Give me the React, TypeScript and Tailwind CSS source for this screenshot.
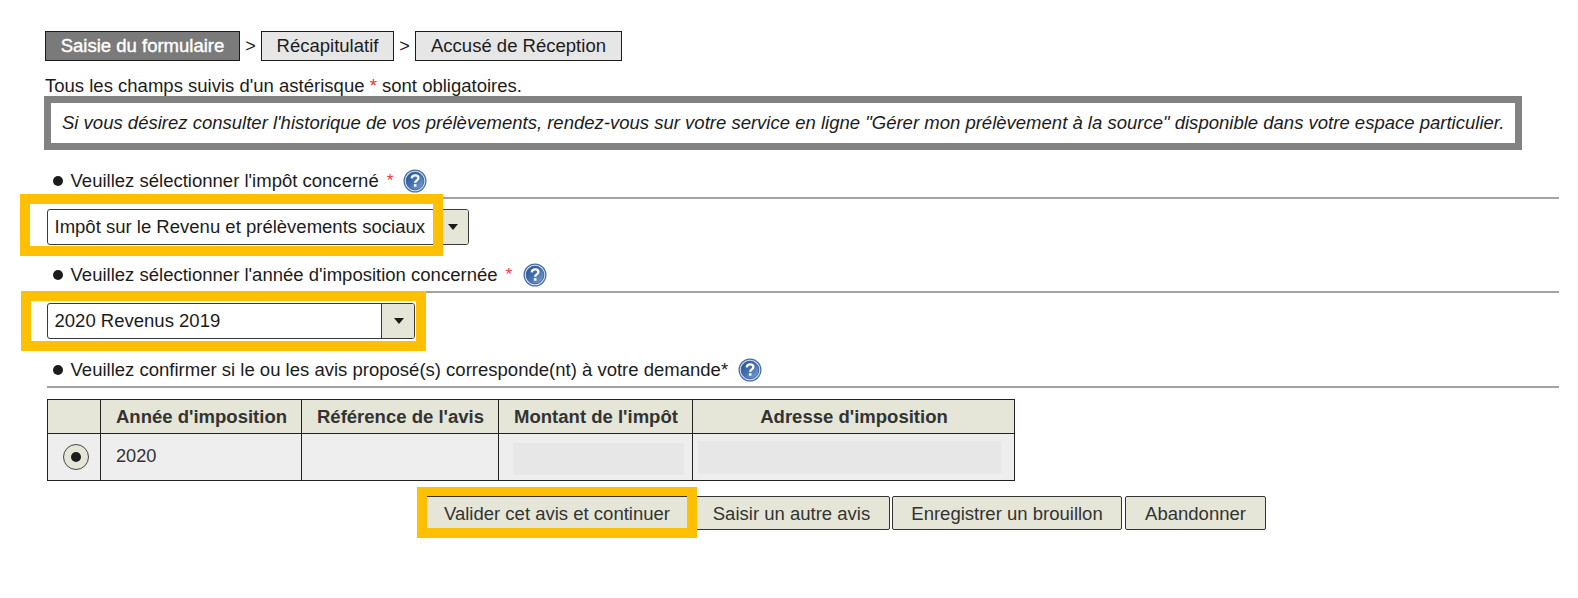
import { ReactNode } from "react";

function Step({ children, className }: { children: ReactNode; className: string }) {
  return (
    <li className={`flex h-[30px] items-center justify-center border border-[#1c1c1c] ${className}`}>
      {children}
    </li>
  );
}

function Separator() {
  return <li className="flex w-[21px] justify-center text-[18px]">&gt;</li>;
}

function HelpIcon({ className }: { className: string }) {
  return (
    <svg viewBox="0 0 24 24" className={`h-6 w-6 shrink-0 ${className}`} role="img" aria-label="Aide">
      <defs>
        <linearGradient id="help-fill" x1="0" y1="0" x2="1" y2="1">
          <stop offset="0" stopColor="#1f4f92" />
          <stop offset="0.5" stopColor="#4673af" />
          <stop offset="1" stopColor="#7ba6d6" />
        </linearGradient>
      </defs>
      <circle cx="12" cy="12" r="10.9" fill="#dfe8f3" stroke="#4a6fa5" strokeWidth="1.2" />
      <circle cx="12" cy="12" r="8.9" fill="url(#help-fill)" stroke="#2e5b98" strokeWidth="0.8" />
      <path
        d="M8.7 9.3c.2-2 1.6-2.9 3.4-2.9 1.9 0 3.3 1 3.3 2.6 0 2.3-3.2 2.4-3.2 4.7"
        fill="none"
        stroke="#ffffff"
        strokeWidth="2.3"
      />
      <rect x="10.9" y="15.2" width="2.6" height="2.5" fill="#ffffff" />
    </svg>
  );
}

function Question({ children, className }: { children: ReactNode; className: string }) {
  return (
    <div className={`ml-[47px] mr-[19px] flex items-center border-b-2 border-[#a3a3a3] pb-[3px] pl-1.5 ${className}`}>
      <span className="mr-[7.5px] h-[10px] w-[10px] rounded-full bg-[#1c1c1c]" />
      {children}
    </div>
  );
}

function SelectBox({ value, className }: { value: string; className: string }) {
  return (
    <div className={`flex h-9 overflow-hidden rounded-[3px] border-[1.5px] border-[#3a3a3a] bg-white ${className}`}>
      <span className="flex grow items-center whitespace-nowrap pl-[6.5px]">{value}</span>
      <span className="flex w-[33px] items-center justify-center border-l border-[#3a3a3a] bg-[#e5e6d8] pl-px">
        <svg viewBox="0 0 10 6" className="h-[6px] w-[10px]">
          <path d="M0 0h10L5 6z" fill="#1c1c1c" />
        </svg>
      </span>
    </div>
  );
}

function Highlight({ className }: { className: string }) {
  return <span className={`pointer-events-none absolute border-[10px] border-[#ffc003] ${className}`} />;
}

function Action({ children, className }: { children: ReactNode; className: string }) {
  return (
    <button className={`h-[34px] rounded-[2px] border border-[#333] bg-[#e5e6d8] pt-px text-[#333] ${className}`}>
      {children}
    </button>
  );
}

export default function App() {
  return (
    <main className="h-[598px] w-[1578px] overflow-hidden whitespace-nowrap bg-white pt-[31px] font-['Liberation_Sans',Arial,sans-serif] text-[18.52px] leading-[22px] text-[#1c1c1c]">
      <ol className="ml-[45px] flex items-center">
        <Step className="w-[195px] bg-[#7a7a7a] text-white [-webkit-text-stroke:0.4px_white]">Saisie du formulaire</Step>
        <Separator />
        <Step className="w-[133px] bg-[#e6e6e6]">Récapitulatif</Step>
        <Separator />
        <Step className="w-[207px] bg-[#e6e6e6]">Accusé de Réception</Step>
      </ol>

      <p className="ml-[45px] mt-[14px] h-[21px]">
        Tous les champs suivis d'un astérisque <span className="text-[#e8303c]">*</span> sont obligatoires.
      </p>
      <p className="ml-[44px] flex h-[54px] w-[1478px] items-center border-[7px] border-[#828282] pl-[11px] italic">
        Si vous désirez consulter l'historique de vos prélèvements, rendez-vous sur votre service en ligne "Gérer mon
        prélèvement à la source" disponible dans votre espace particulier.
      </p>

      <Question className="mt-[18px] h-[31px]">
        Veuillez sélectionner l'impôt concerné
        <span className="ml-[8px] text-[17px] text-[#f03a3a]">*</span>
        <HelpIcon className="ml-[10px]" />
      </Question>
      <div className="relative ml-[47px] mt-[10px] w-[422px]">
        <SelectBox value="Impôt sur le Revenu et prélèvements sociaux" className="w-[422px]" />
        <Highlight className="-left-[27px] -top-[15px] h-[62px] w-[423px]" />
      </div>

      <Question className="mt-[17px] h-[31px]">
        Veuillez sélectionner l'année d'imposition concernée
        <span className="ml-[8px] text-[17px] text-[#f03a3a]">*</span>
        <HelpIcon className="ml-[11px]" />
      </Question>
      <div className="relative ml-[47px] mt-[10px] w-[368px]">
        <SelectBox value="2020 Revenus 2019" className="w-[368px]" />
        <Highlight className="-left-[26px] -top-[12px] h-[60px] w-[405px]" />
      </div>

      <Question className="mt-[17px] h-[32px]">
        Veuillez confirmer si le ou les avis proposé(s) corresponde(nt) à votre demande*
        <HelpIcon className="ml-[10px]" />
      </Question>

      <table className="ml-[47px] mt-[11px] w-[968px] table-fixed border-collapse border border-[#222] text-[#333]">
        <colgroup>
          <col className="w-[53px]" />
          <col className="w-[201px]" />
          <col className="w-[197px]" />
          <col className="w-[194px]" />
          <col />
        </colgroup>
        <thead>
          <tr className="h-[34px] bg-[#e5e6d8]">
            <th className="border border-[#222]" />
            <th className="border border-[#222] pl-px">Année d'imposition</th>
            <th className="border border-[#222] pl-px">Référence de l'avis</th>
            <th className="border border-[#222] pl-px">Montant de l'impôt</th>
            <th className="border border-[#222] pl-px">Adresse d'imposition</th>
          </tr>
        </thead>
        <tbody>
          <tr className="h-[47px] bg-[#eeeeee]">
            <td className="border border-[#222] pl-[3px]">
              <span className="mx-auto flex h-[26px] w-[26px] items-center justify-center rounded-full border-[1.5px] border-[#444] bg-[#e5e6d8]">
                <span className="h-[10px] w-[10px] rounded-full bg-[#1c1c1c]" />
              </span>
            </td>
            <td className="border border-[#222] pb-0.5 pl-[15px] text-[18.2px]">2020</td>
            <td className="border border-[#222]" />
            <td className="border border-[#222] pt-1">
              <div className="ml-[14px] h-8 w-[171px] bg-[#e7e7e7]" />
            </td>
            <td className="border border-[#222]">
              <div className="ml-[5px] h-[33px] w-[303px] bg-[#e7e7e7]" />
            </td>
          </tr>
        </tbody>
      </table>

      <div className="relative ml-[424px] mt-[15px] flex">
        <Action className="mr-[3px] w-[266px]">Valider cet avis et continuer</Action>
        <Action className="mr-[2px] w-[197px]">Saisir un autre avis</Action>
        <Action className="mr-[3px] w-[230px]">Enregistrer un brouillon</Action>
        <Action className="w-[141px]">Abandonner</Action>
        <Highlight className="-left-[7px] -top-[9px] h-[51px] w-[280px] border-t-[9px]" />
      </div>
    </main>
  );
}
